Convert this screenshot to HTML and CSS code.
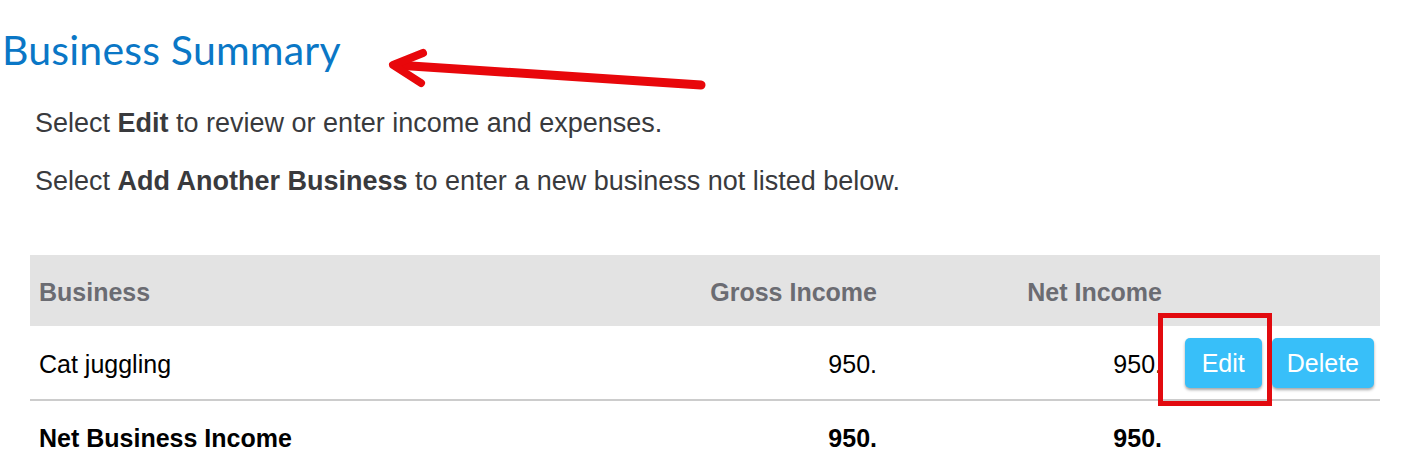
FILE: index.html
```html
<!DOCTYPE html>
<html lang="en">
<head>
<meta charset="utf-8">
<title>Business Summary</title>
<link rel="stylesheet" href="styles.css">
</head>
<body>
<main class="page">
  <h1 class="title">Business Summary</h1>
  <p class="intro">Select <strong>Edit</strong> to review or enter income and expenses.</p>
  <p class="intro">Select <strong>Add Another Business</strong> to enter a new business not listed below.</p>

  <div class="table">
    <div class="row head">
      <div class="cell name">Business</div>
      <div class="cell num">Gross Income</div>
      <div class="cell num">Net Income</div>
      <div class="cell actions"></div>
    </div>
    <div class="row item">
      <div class="cell name">Cat juggling</div>
      <div class="cell num">950.</div>
      <div class="cell num">950.</div>
      <div class="cell actions">
        <button class="btn btn-edit">Edit</button>
        <button class="btn btn-delete">Delete</button>
      </div>
    </div>
    <div class="row total">
      <div class="cell name">Net Business Income</div>
      <div class="cell num">950.</div>
      <div class="cell num">950.</div>
      <div class="cell actions"></div>
    </div>
  </div>
</main>

<svg class="annotations" width="1413" height="467" viewBox="0 0 1413 467" aria-hidden="true">
  <g stroke="#e8070b" fill="none" stroke-linecap="round" stroke-linejoin="round">
    <line x1="701" y1="85" x2="396" y2="65" stroke-width="9"/>
    <polyline points="423,53 393,65 421,83" stroke-width="8"/>
  </g>
  <rect x="1160.5" y="315.5" width="109" height="88" fill="none" stroke="#e20a0f" stroke-width="5"/>
</svg>
</body>
</html>
```

FILE: styles.css
```css
html, body {
  margin: 0;
  padding: 0;
  background: #ffffff;
}

body {
  position: relative;
  width: 1413px;
  height: 467px;
  overflow: hidden;
  font-family: "Liberation Sans", Arial, sans-serif;
}

.page {
  padding: 0 0 0 2px;
}

.title {
  margin: 0;
  padding-top: 25px;
  font-family: Lato, "Open Sans", sans-serif;
  font-weight: 400;
  font-size: 41px;
  line-height: 50px;
  color: #0a77c6;
  letter-spacing: 0.2px;
}

.intro {
  margin: 0 0 0 33px;
  font-size: 27px;
  line-height: 28px;
  color: #393a3d;
}

.intro:first-of-type {
  margin-top: 34px;
}

.intro + .intro {
  margin-top: 30px;
}

.intro strong {
  font-weight: 700;
}

.table {
  margin: 60px 0 0 28px;
  width: 1350px;
}

.row {
  display: grid;
  grid-template-columns: 1fr 290px 285px 218px;
  align-items: center;
  font-size: 25px;
  line-height: 28px;
}

.cell.name {
  padding-left: 9px;
}

.cell.num {
  text-align: right;
}

.head {
  background: #e3e3e3;
  height: 71px;
  color: #6b6c72;
  font-weight: 700;
}

.head .cell {
  padding-top: 2px;
}

.item {
  height: 73px;
  border-bottom: 2px solid #cccccc;
  color: #000000;
}

.item .cell {
  padding-top: 3px;
}

.total {
  height: 73px;
  color: #000000;
  font-weight: 700;
  align-items: start;
}

.total .cell {
  padding-top: 23px;
}

.actions {
  display: flex;
  justify-content: flex-end;
  gap: 10px;
  padding-right: 6px;
}

.item .actions {
  padding-top: 0;
}

.btn {
  height: 50px;
  border: none;
  border-radius: 5px;
  background: #38bff9;
  color: #ffffff;
  font-family: "Liberation Sans", Arial, sans-serif;
  font-size: 25px;
  line-height: 50px;
  box-shadow: 0 2px 3px rgba(0, 0, 0, 0.35);
}

.btn-edit {
  padding: 0 17px;
}

.btn-delete {
  padding: 0 15px;
}

.annotations {
  position: absolute;
  left: 0;
  top: 0;
  pointer-events: none;
}
```
